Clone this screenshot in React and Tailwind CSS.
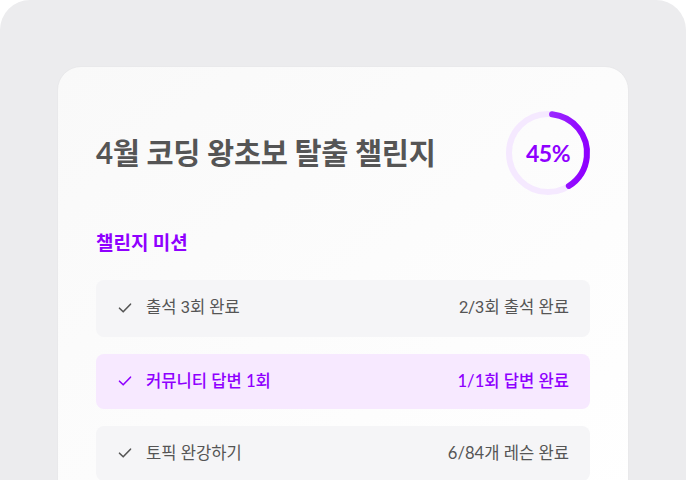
import React from "react";

const missions = [
  { title: "출석 3회 완료", status: "2/3회 출석 완료", active: false, font: "font-['Roboto','Noto_Sans_CJK_KR',sans-serif]" },
  { title: "커뮤니티 답변 1회", status: "1/1회 답변 완료", active: true, font: "font-['Lato','Noto_Sans_CJK_KR',sans-serif]" },
  { title: "토픽 완강하기", status: "6/84개 레슨 완료", active: false, font: "font-['Lato','Noto_Sans_CJK_KR',sans-serif]" },
];

const Check = ({ className }) => (
  <svg width="14" height="14" viewBox="0 0 14 14" fill="none" className={className}>
    <path d="M1.5 7.2 L5.2 10.8 L12.5 3.2" stroke="currentColor" strokeWidth="1.6" strokeLinecap="round" strokeLinejoin="round" />
  </svg>
);

const Ring = ({ percent }) => {
  const r = 39;
  const c = 2 * Math.PI * r;
  return (
    <div className="relative w-[90px] h-[90px]">
      <svg width="90" height="90" viewBox="0 0 90 90">
        <defs>
          <linearGradient id="ringGrad" x1="0" y1="0" x2="0" y2="1">
            <stop offset="0%" stopColor="#a64dff" />
            <stop offset="100%" stopColor="#8f00ff" />
          </linearGradient>
        </defs>
        <circle cx="45" cy="45" r={r} fill="none" stroke="#f5e9ff" strokeWidth="6" />
        <circle
          cx="45"
          cy="45"
          r={r}
          fill="none"
          stroke="url(#ringGrad)"
          strokeWidth="6"
          strokeLinecap="round"
          strokeDasharray={`${c * percent / 100 - 14} ${c}`}
          transform="rotate(-84 45 45)"
        />
      </svg>
      <div className="absolute inset-0 flex items-center justify-center text-[23px] font-bold text-[#8f00ff] font-['Lato',sans-serif] tracking-tight">
        {percent}%
      </div>
    </div>
  );
};

export default function App() {
  return (
    <div className="w-[686px] h-[480px] bg-white overflow-hidden">
      <div className="h-full bg-[#ececee] rounded-t-[30px] pt-[66px] px-[57px]">
        <div className="h-[440px] rounded-[24px] bg-gradient-to-br from-[#f9f9f9] to-white border border-[#e9e9eb] px-[38px] pt-[41px]">

          <div className="flex items-center justify-between">
            <h1 className="text-[29.5px] font-bold text-[#555555] font-['Lato','Noto_Sans_CJK_KR',sans-serif] tracking-[-0.3px]">
              4월 코딩 왕초보 탈출 챌린지
            </h1>
            <div className="mr-[-3px]">
              <Ring percent={45} />
            </div>
          </div>

          <h2 className="mt-[30px] text-[19px] font-bold text-[#8f00ff] font-['Noto_Sans_CJK_KR',sans-serif]">
            챌린지 미션
          </h2>

          <div className="mt-[23px] flex flex-col gap-[17px]">
            {missions.map((m, i) => (
              <div
                key={i}
                className={`${m.font} ${i === 0 ? "h-[57px]" : "h-[55px]"} rounded-[8px] flex items-center justify-between pl-[22px] pr-[21px] text-[16.6px] ${m.active ? "bg-[#f7e9ff] text-[#8f00ff] font-medium" : "bg-[#f5f5f7] text-[#555555]"}`}
              >
                <div className="flex items-center gap-[14px]">
                  <Check className={m.active ? "text-[#8f00ff]" : "text-[#555555]"} />
                  <span>{m.title}</span>
                </div>
                <span>{m.status}</span>
              </div>
            ))}
          </div>

        </div>
      </div>
    </div>
  );
}
